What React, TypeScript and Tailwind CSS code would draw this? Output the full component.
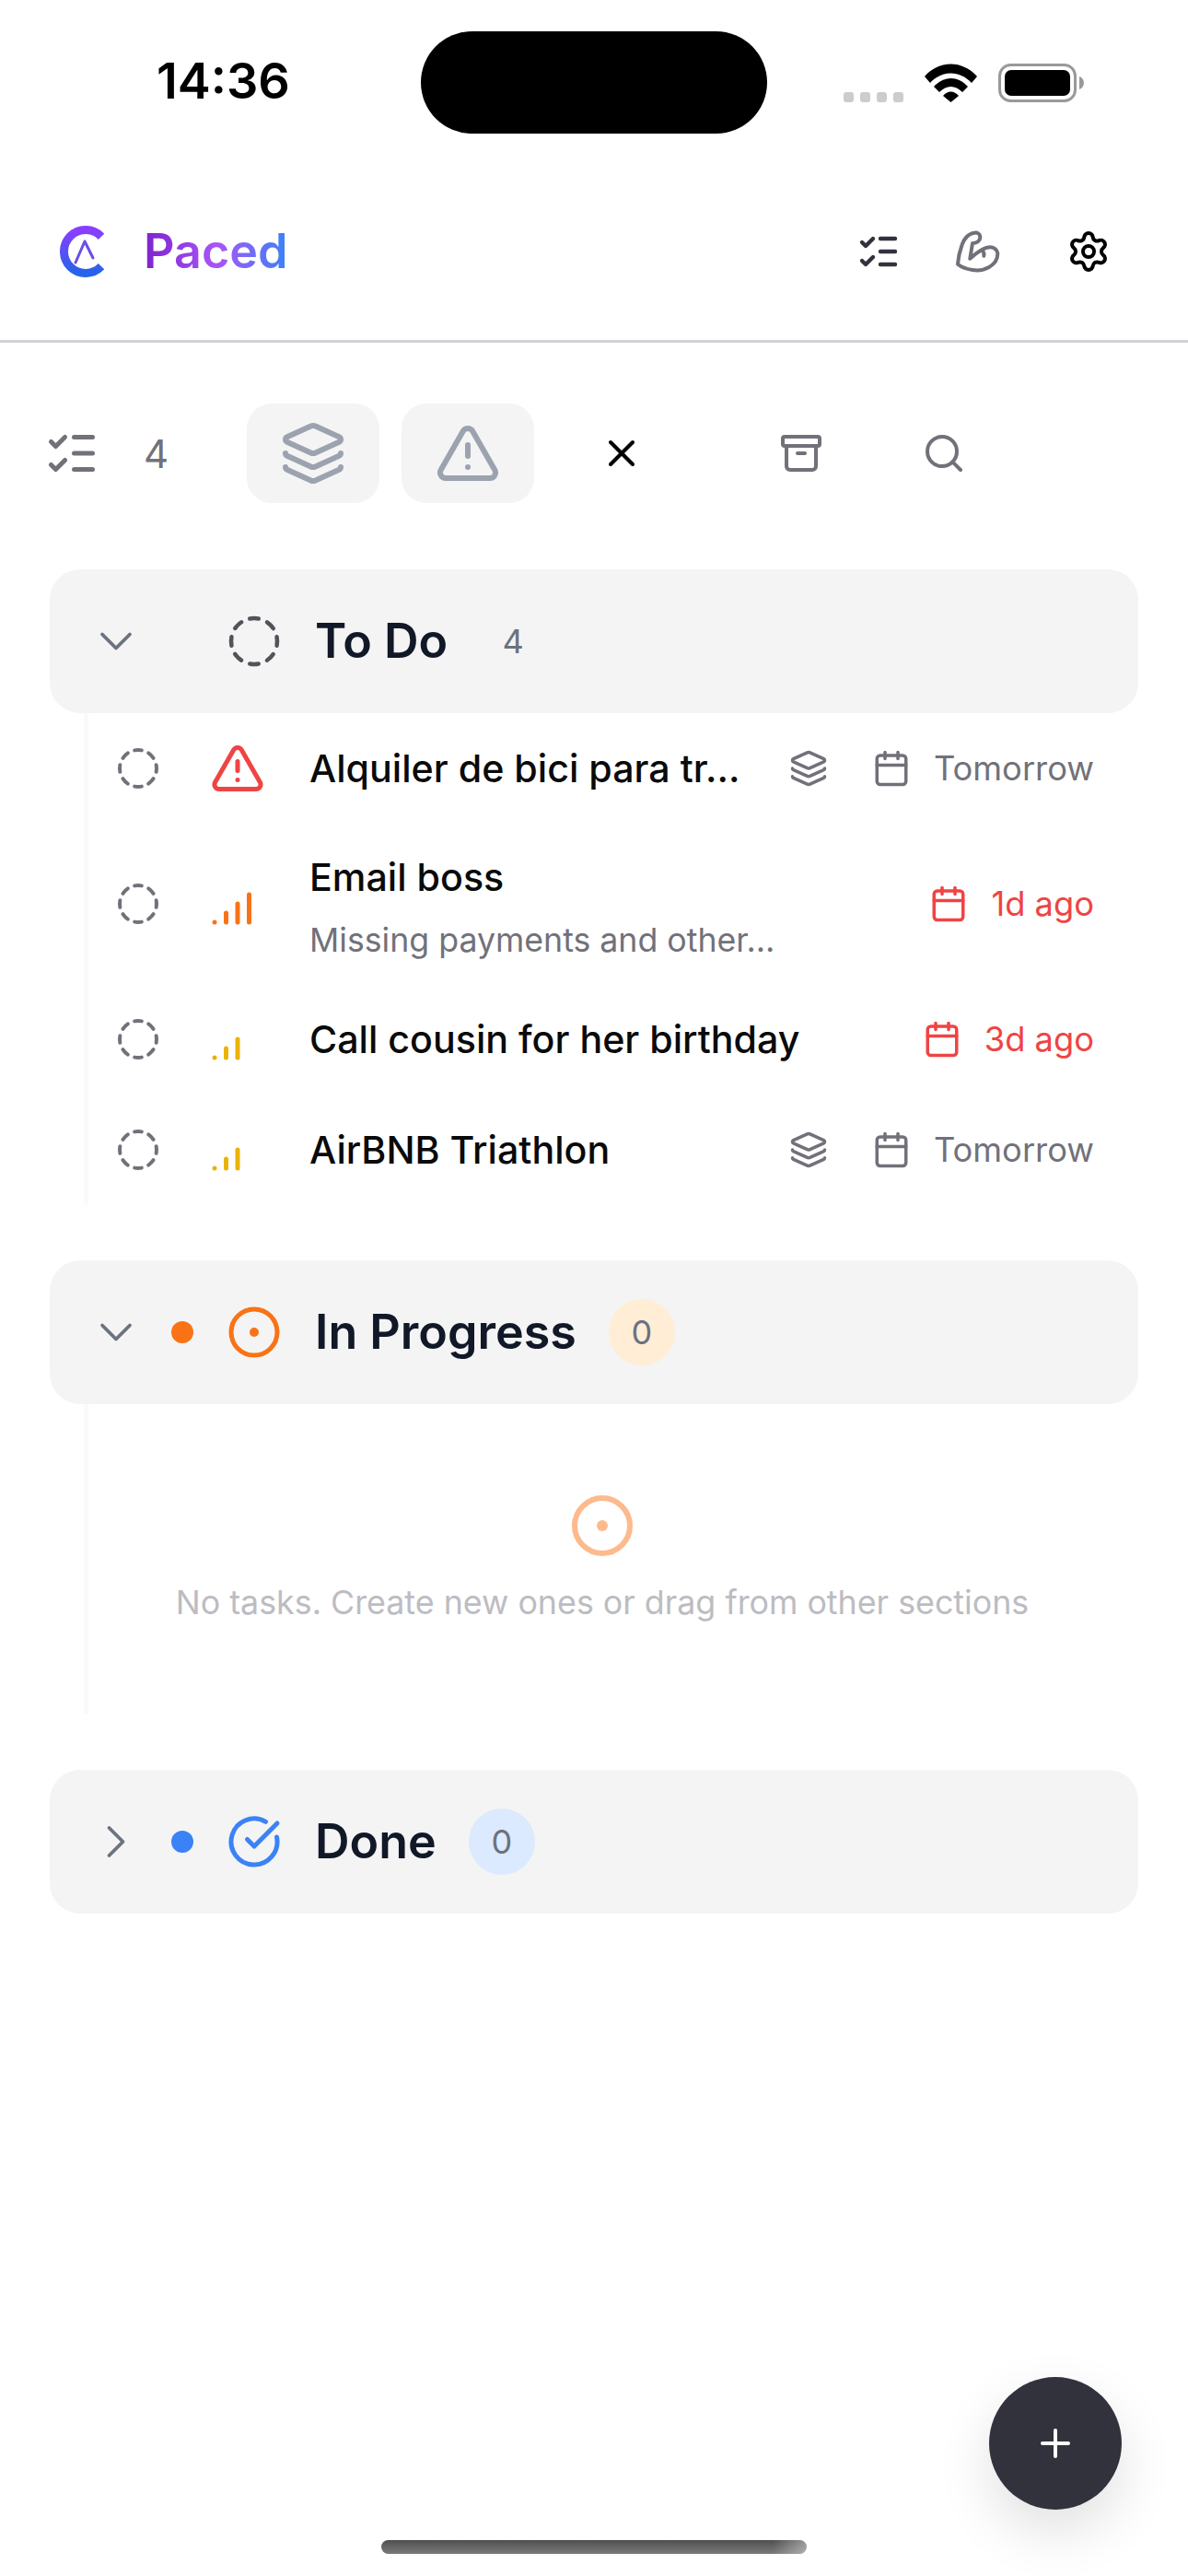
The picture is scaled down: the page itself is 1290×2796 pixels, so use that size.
import {
  Archive,
  Calendar,
  ChevronDown,
  ChevronRight,
  CircleCheckBig,
  CircleDashed,
  Layers,
  ListChecks,
  Plus,
  Search,
  Settings,
  SignalHigh,
  SignalMedium,
  TriangleAlert,
  X,
} from 'lucide-react'
import type { ReactNode } from 'react'

type Task = {
  title: string
  note?: string
  priority: 'urgent' | 'high' | 'medium'
  due: string
  overdue?: boolean
  inProject?: boolean
}

const tasks: Task[] = [
  { title: 'Alquiler de bici para tr…', priority: 'urgent', due: 'Tomorrow', inProject: true },
  { title: 'Email boss', note: 'Missing payments and other…', priority: 'high', due: '1d ago', overdue: true },
  { title: 'Call cousin for her birthday', priority: 'medium', due: '3d ago', overdue: true },
  { title: 'AirBNB Triathlon', priority: 'medium', due: 'Tomorrow', inProject: true },
]

function StatusBar() {
  return (
    <div className="flex h-[180px] items-start pt-[34px] pl-[170px]">
      <div className="flex h-[111px] w-[287px] items-center pb-[3px]">
        <span className="text-[54px] leading-none font-semibold text-black">14:36</span>
      </div>
      <div className="h-[111px] w-[376px] rounded-full bg-black" />
      <div className="mb-[7px] ml-[83px] flex h-[111px] items-center">
        <div className="flex h-[42px] items-end">
          <div className="flex gap-[7px]">
            <span className="h-[11px] w-[11px] rounded-[3px] bg-[#cccccc]" />
            <span className="h-[11px] w-[11px] rounded-[3px] bg-[#cccccc]" />
            <span className="h-[11px] w-[11px] rounded-[3px] bg-[#cccccc]" />
            <span className="h-[11px] w-[11px] rounded-[3px] bg-[#cccccc]" />
          </div>
          <svg className="ml-[23px]" width="57" height="42" viewBox="0 0 57 42">
            <path d="M0 14 C16 -4 41 -4 57 14 L51 21 C38 7 19 7 6 21 Z" fill="#000" />
            <path d="M10 25 C21 13 36 13 47 25 L41 31 C33 23 24 23 16 31 Z" fill="#000" />
            <path d="M20 35 C25 29 32 29 37 35 L28.5 42 Z" fill="#000" />
          </svg>
          <svg className="ml-[23px]" width="93" height="42" viewBox="0 0 93 42">
            <rect x="1.5" y="1.5" width="82" height="39" rx="12" fill="none" stroke="#999999" strokeWidth="3" />
            <rect x="7" y="7" width="71" height="28" rx="7" fill="#000" />
            <path d="M88 14 C91 15 93 18 93 21 C93 24 91 27 88 28 Z" fill="#999999" />
          </svg>
        </div>
      </div>
    </div>
  )
}

function Logo() {
  return (
    <svg width="48" height="56" viewBox="0 0 48 56" fill="none">
      <defs>
        <linearGradient id="logo-c" x1="0" y1="0" x2="0" y2="1">
          <stop offset="0" stopColor="#8b3dff" />
          <stop offset="1" stopColor="#2563eb" />
        </linearGradient>
      </defs>
      <path d="M45 11.8 A23.5 23.5 0 1 0 45 44.2" stroke="url(#logo-c)" strokeWidth="9" fill="none" />
      <path d="M17 40 L27 17 L36 35" stroke="#6d4ce8" strokeWidth="3" strokeLinecap="round" strokeLinejoin="round" />
    </svg>
  )
}

function MuscleIcon({ className }: { className?: string }) {
  return (
    <svg className={className} width="48" height="48" viewBox="0 0 48 48" fill="none" stroke="#71717a" strokeWidth="4" strokeLinecap="round" strokeLinejoin="round">
      <path d="M15.3 31.7 L18 15 C22 15 26.5 13 26.3 8 C26 4.5 23 3.2 20.3 3.7 C13 4.5 9 10 6.5 17 C4 24 2.5 31 2 37.7 C6 41 12 43 18 44 C24 45 30 44.5 36 41 C42 37.5 45.5 32 45.3 26 C45 22 41 19.3 37 19.3 C31 19.3 24 24 15.3 31.7" />
      <path d="M28 22.5 C30 24 31 26 30.3 28.7" />
    </svg>
  )
}

function TopBar() {
  return (
    <header className="flex h-[192px] items-center border-b-[3px] border-[#d1d1d6] pb-[3px] pl-[65px] pr-[84px]">
      <Logo />
      <span className="ml-[43px] bg-[linear-gradient(90deg,#7e22ce,#a855f7,#3b82f6)] bg-clip-text text-[52px] leading-none font-semibold text-transparent">
        Paced
      </span>
      <div className="ml-auto flex items-center">
        <ListChecks size={48} color="#32323c" strokeWidth={2.2} />
        <MuscleIcon className="ml-[60px]" />
        <Settings size={48} color="#000" className="ml-[72px]" />
      </div>
    </header>
  )
}

function Toolbar() {
  return (
    <div className="mt-[66px] flex h-[108px] items-center pl-[48px]">
      <ListChecks size={60} color="#71717a" />
      <span className="ml-[48px] w-[112px] text-[42px] text-[#71717a]">4</span>
      <button type="button" className="flex h-[108px] w-[144px] items-center justify-center rounded-[27px] bg-[#f4f4f5]">
        <Layers size={72} color="#9ca3af" />
      </button>
      <button type="button" className="ml-[24px] flex h-[108px] w-[144px] items-center justify-center rounded-[27px] bg-[#f4f4f5]">
        <TriangleAlert size={72} color="#9ca3af" />
      </button>
      <X size={48} color="#000" className="ml-[71px]" />
      <Archive size={48} color="#71717a" className="ml-[147px]" />
      <Search size={48} color="#71717a" className="ml-[107px]" />
    </div>
  )
}

function RingIcon({ className }: { className: string }) {
  return (
    <svg className={className} viewBox="0 0 24 24" fill="none" stroke="currentColor" strokeWidth="2">
      <circle cx="12" cy="12" r="10" />
      <circle cx="12" cy="12" r="2" fill="currentColor" stroke="none" />
    </svg>
  )
}

function SectionHeader({
  title,
  count,
  open,
  dot,
  badge,
  icon,
}: {
  title: string
  count: number
  open: boolean
  dot?: string
  badge?: string
  icon: ReactNode
}) {
  return (
    <div className="flex h-[156px] items-center rounded-[33px] bg-[#f4f4f4] pl-[42px]">
      {open ? (
        <ChevronDown size={60} color="#6b7280" strokeWidth={1.5} />
      ) : (
        <ChevronRight size={60} color="#6b7280" strokeWidth={1.5} />
      )}
      <span className={`ml-[30px] h-[24px] w-[24px] rounded-full ${dot ?? ''}`} />
      <span className="ml-[36px] flex h-[60px] w-[60px]">{icon}</span>
      <span className="ml-[36px] text-[52px] leading-none font-semibold text-[#111827]">{title}</span>
      <span className={`ml-[35px] flex h-[72px] w-[72px] items-center justify-center rounded-full text-[36px] text-[#6b7280] ${badge ?? ''}`}>
        {count}
      </span>
    </div>
  )
}

function PriorityIcon({ priority }: { priority: Task['priority'] }) {
  if (priority === 'urgent') return <TriangleAlert size={60} color="#ef4444" />
  if (priority === 'high') return <SignalHigh size={60} color="#f97316" />
  return <SignalMedium size={60} color="#eab308" />
}

function TaskRow({ task }: { task: Task }) {
  const dueColor = task.overdue ? '#ef4444' : '#71717a'
  return (
    <div className={`flex items-center pl-[30px] pr-[48px] ${task.note ? 'h-[174px]' : 'h-[120px]'}`}>
      <CircleDashed size={48} color="#71717a" className="shrink-0" />
      <span className="ml-[54px] shrink-0">
        <PriorityIcon priority={task.priority} />
      </span>
      <div className={`ml-[48px] min-w-0 flex-1 ${task.note ? 'pt-[10px]' : ''}`}>
        <div className="text-[41.2px] leading-[54px] font-medium whitespace-nowrap text-[#0a0a0a]">{task.title}</div>
        {task.note && (
          <div className="mt-[14px] text-[35.7px] leading-[54px] whitespace-nowrap text-[#71717a]">{task.note}</div>
        )}
      </div>
      {task.inProject && <Layers size={42} color="#71717a" className="mr-[48px] shrink-0" />}
      <Calendar size={42} color={dueColor} className="shrink-0" />
      <span className="ml-[25px] shrink-0 text-[36.3px] whitespace-nowrap" style={{ color: dueColor }}>
        {task.due}
      </span>
    </div>
  )
}

export default function App() {
  return (
    <div className="relative h-[2796px] w-[1290px] overflow-hidden bg-white font-['Inter',sans-serif]">
      <StatusBar />
      <TopBar />
      <Toolbar />

      <main className="mt-[72px] flex flex-col px-[54px]">
        <section>
          <SectionHeader
            title="To Do"
            count={4}
            open
            icon={<CircleDashed size={60} color="#52525b" strokeWidth={1.8} />}
          />
          <div className="ml-[37px] border-l-[5px] border-[#fafafa]">
            {tasks.map((task) => (
              <TaskRow key={task.title} task={task} />
            ))}
          </div>
        </section>

        <section className="mt-[60px]">
          <SectionHeader
            title="In Progress"
            count={0}
            open
            dot="bg-[#f97316]"
            badge="bg-[#ffedd5]"
            icon={<RingIcon className="h-[60px] w-[60px] text-[#f97316]" />}
          />
          <div className="ml-[37px] flex h-[337px] flex-col items-center justify-center border-l-[5px] border-[#fafafa] pr-[24px]">
            <RingIcon className="h-[72px] w-[72px] text-[#fdba8c]" />
            <p className="mt-[20px] text-[35.8px] leading-[54px] text-[#bcbcc2]">
              No tasks. Create new ones or drag from other sections
            </p>
          </div>
        </section>

        <section className="mt-[60px]">
          <SectionHeader
            title="Done"
            count={0}
            open={false}
            dot="bg-[#3b82f6]"
            badge="bg-[#dbeafe]"
            icon={<CircleCheckBig size={60} color="#3b82f6" />}
          />
        </section>
      </main>

      <button
        type="button"
        className="absolute right-[72px] bottom-[72px] flex h-[144px] w-[144px] items-center justify-center rounded-full bg-[#32323c] shadow-[0_24px_60px_rgba(0,0,0,0.12)]"
      >
        <Plus size={48} color="#fff" strokeWidth={2} />
      </button>
      <div className="absolute top-[2757px] left-[414px] h-[15px] w-[462px] rounded-full bg-[linear-gradient(90deg,transparent_92%,rgba(255,255,255,0.4)),linear-gradient(180deg,#4f4f4f,#7a7a7a)]" />
    </div>
  )
}
